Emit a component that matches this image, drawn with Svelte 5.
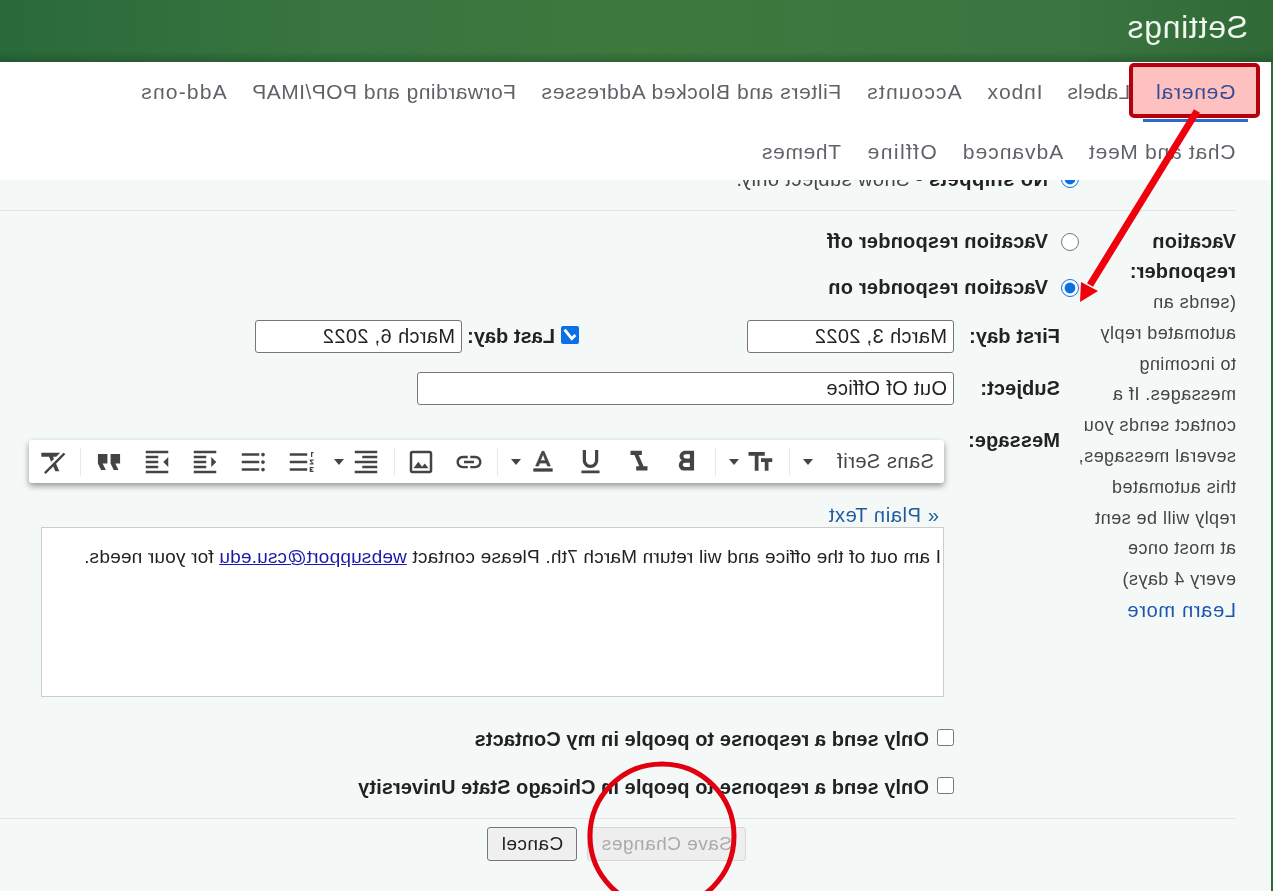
<script lang="ts">
  // the reference is a mirrored shot of the settings page, so the page is
  // written left-to-right and flipped as a whole
  // ls = letter spacing per tab, the shot's font is a little wider on some words
  const row1 = [
    { name: 'General', ls: 0.8 },
    { name: 'Labels', ls: 0.15 },
    { name: 'Inbox', ls: 0.85 },
    { name: 'Accounts', ls: 1.15 },
    { name: 'Filters and Blocked Addresses', ls: 0.61 },
    { name: 'Forwarding and POP/IMAP', ls: 0.48 },
    { name: 'Add-ons', ls: 1.2 }
  ];
  const row2 = [
    { name: 'Chat and Meet', ls: 0.73 },
    { name: 'Advanced', ls: 1 },
    { name: 'Offline', ls: 1.5 },
    { name: 'Themes', ls: 0.65 }
  ];

  const help = ['(sends an', 'automated reply', 'to incoming', 'messages. If a', 'contact sends you', 'several messages,', 'this automated', 'reply will be sent', 'at most once', 'every 4 days)'];

  const icons = {
    size: 'M9 4v3h5v12h3V7h5V4H9zm-6 8h3v7h3v-7h3V9H3v3z',
    bold: 'M15.6 10.79c.97-.67 1.65-1.77 1.65-2.79 0-2.26-1.75-4-4-4H7v14h7.04c2.09 0 3.71-1.7 3.71-3.79 0-1.52-.86-2.82-2.15-3.42zM10 6.5h3c.83 0 1.5.67 1.5 1.5s-.67 1.5-1.5 1.5h-3v-3zm3.5 9H10v-3h3.5c.83 0 1.5.67 1.5 1.5s-.67 1.5-1.5 1.5z',
    italic: 'M10 4v3h2.21l-3.42 8H6v3h8v-3h-2.21l3.42-8H18V4z',
    underline: 'M12 17c3.31 0 6-2.69 6-6V3h-2.5v8c0 1.93-1.57 3.5-3.5 3.5S8.5 12.93 8.5 11V3H6v8c0 3.31 2.69 6 6 6zm-7 2v2h14v-2H5z',
    color: 'M5 17v2h14v-2H5zm4.5-4.2h5l.9 2.2h2.1L12.75 4h-1.5L6.5 15h2.1l.9-2.2zM12 5.98L13.87 11h-3.74L12 5.98z',
    link: 'M3.9 12c0-1.71 1.39-3.1 3.1-3.1h4V7H7c-2.76 0-5 2.24-5 5s2.24 5 5 5h4v-1.9H7c-1.71 0-3.1-1.39-3.1-3.1zM8 13h8v-2H8v2zm9-6h-4v1.9h4c1.71 0 3.1 1.39 3.1 3.1s-1.39 3.1-3.1 3.1h-4V17h4c2.76 0 5-2.24 5-5s-2.24-5-5-5z',
    image: 'M19 5v14H5V5h14m0-2H5c-1.1 0-2 .9-2 2v14c0 1.1.9 2 2 2h14c1.1 0 2-.9 2-2V5c0-1.1-.9-2-2-2zm-4.86 8.86l-3 3.87L9 13.14 6 17h12l-3.86-5.14z',
    align: 'M15 15H3v2h12v-2zm0-8H3v2h12V7zM3 13h18v-2H3v2zm0 8h18v-2H3v2zM3 3v2h18V3H3z',
    numbered: 'M2 17h2v.5H3v1h1v.5H2v1h3v-4H2v1zm1-9h1V4H2v1h1v3zm-1 3h1.8L2 13.1v.9h3v-1H3.2L5 10.9V10H2v1zm5-6v2h14V5H7zm0 14h14v-2H7v2zm0-6h14v-2H7v2z',
    bulleted: 'M4 10.5c-.83 0-1.5.67-1.5 1.5s.67 1.5 1.5 1.5 1.5-.67 1.5-1.5-.67-1.5-1.5-1.5zm0-6c-.83 0-1.5.67-1.5 1.5S3.17 7.5 4 7.5 5.5 6.83 5.5 6 4.83 4.5 4 4.5zm0 12c-.83 0-1.5.68-1.5 1.5s.68 1.5 1.5 1.5 1.5-.68 1.5-1.5-.67-1.5-1.5-1.5zM7 19h14v-2H7v2zm0-6h14v-2H7v2zm0-8v2h14V5H7z',
    outdent: 'M11 17h10v-2H11v2zm-8-5l4 4V8l-4 4zm0 9h18v-2H3v2zM3 3v2h18V3H3zm8 6h10V7H11v2zm0 4h10v-2H11v2z',
    indent: 'M3 21h18v-2H3v2zM3 8v8l4-4-4-4zm8 9h10v-2H11v2zM3 3v2h18V3H3zm8 6h10V7H11v2zm0 4h10v-2H11v2z',
    quote: 'M6 17h3l2-4V7H5v6h3zm8 0h3l2-4V7h-6v6h3z',
    clear: 'M3.27 5L2 6.27l6.97 6.97L6.5 19h3l1.57-3.66L16.73 21 18 19.73 3.55 5.27 3.27 5zM6 5v.18L8.82 8h2.4l-.72 1.68 2.1 2.1L14.21 8H20V5H6z'
  };

  // toolbar groups, a caret follows an icon where the name ends in "+"
  const groups = [
    ['size+'],
    ['bold', 'italic', 'underline', 'color+'],
    ['link', 'image'],
    ['align+', 'numbered', 'bulleted', 'outdent', 'indent', 'quote'],
    ['clear']
  ];
</script>

<div class="page">
  <header class="top">
    <h1>Settings</h1>
  </header>

  <nav class="tabs">
    <div class="tab-row">
      {#each row1 as tab, i}
        <span class="tab" class:active={i === 0} style:letter-spacing="{tab.ls}px">{tab.name}</span>
      {/each}
    </div>
    <div class="tab-row">
      {#each row2 as tab}
        <span class="tab" style:letter-spacing="{tab.ls}px">{tab.name}</span>
      {/each}
    </div>
  </nav>

  <main class="content">
    <div class="snippets">
      <input type="radio" checked name="snip" />
      <span class="opt"><b>No snippets</b> - Show subject only.</span>
    </div>

    <section class="vacation">
      <div class="side">
        <b class="side-title">Vacation responder:</b>
        {#each help as line}
          <span class="side-line">{line}</span>
        {/each}
        <a class="side-line link" href="#more">Learn more</a>
      </div>

      <div class="main">
        <label class="radio-row">
          <input type="radio" name="vac" />
          <b>Vacation responder off</b>
        </label>
        <label class="radio-row">
          <input type="radio" name="vac" checked />
          <b>Vacation responder on</b>
        </label>

        <div class="form-row first">
          <b class="form-label">First day:</b>
          <input class="text date" type="text" value="March 3, 2022" />
          <input class="last-check" type="checkbox" checked />
          <b class="last-label">Last day:</b>
          <input class="text date" type="text" value="March 6, 2022" />
        </div>

        <div class="form-row subject">
          <b class="form-label">Subject:</b>
          <input class="text subject-input" type="text" value="Out Of Office" />
        </div>

        <div class="form-row message">
          <b class="form-label">Message:</b>
          <div class="editor">
            <div class="toolbar">
              <span class="font-name">Sans Serif</span>
              <i class="caret font-caret"></i>
              {#each groups as group, g}
                <span class="sep sep-{g}"></span>
                {#each group as item}
                  <span class="tool">
                    <span class="glyph i-{item.replace('+', '')}">
                      <svg viewBox="0 0 24 24"><path d={icons[item.replace('+', '')]} /></svg>
                    </span>
                    {#if item.endsWith('+')}<i class="caret tool-caret"></i>{/if}
                  </span>
                {/each}
              {/each}
            </div>
            <a class="plain" href="#plain">« Plain Text</a>
            <div class="body-box">I am out of the office and wil return March 7th. Please contact <a href="#mail">websupport@csu.edu</a> for your needs.</div>
          </div>
        </div>

        <label class="only first-only">
          <input type="checkbox" />
          <b>Only send a response to people in my Contacts</b>
        </label>
        <label class="only">
          <input type="checkbox" />
          <b>Only send a response to people in Chicago State University</b>
        </label>
      </div>
    </section>

    <div class="actions">
      <button class="btn" disabled>Save Changes</button>
      <button class="btn">Cancel</button>
    </div>
  </main>

  <!-- hand-drawn annotations lying over the page -->
  <svg class="marks tint" width="1273" height="891" viewBox="0 0 1273 891">
    <rect x="15" y="65" width="127" height="51" fill="#ffc0c0" />
  </svg>
  <svg class="marks" width="1273" height="891" viewBox="0 0 1273 891">
    <rect x="15" y="65" width="127" height="51" rx="3" fill="none" stroke="#b6000e" stroke-width="4" />
    <path d="M76 111L183 285" stroke="#f0000c" stroke-width="7" fill="none" />
    <path d="M193 302L192 282L175 291z" fill="#f0000c" />
    <circle cx="611" cy="836" r="72" fill="none" stroke="#e0000f" stroke-width="5" />
  </svg>
</div>

<style>
  :global(body) {
    margin: 0;
    background: #f4f8f6;
  }

  .page {
    position: relative;
    width: 1273px;
    height: 891px;
    overflow: hidden;
    display: flex;
    flex-direction: column;
    transform: scaleX(-1);
    font-family: "Liberation Sans", Arial, sans-serif;
    color: #222;
    background: #f4f8f6;
  }

  .top {
    height: 62px;
    flex: none;
    box-sizing: border-box;
    padding-left: 25px;
    background:
      linear-gradient(180deg, rgba(255, 255, 255, 0) 82%, rgba(0, 30, 10, 0.22) 100%),
      linear-gradient(90deg, #2f6a36 0%, #3a7540 15%, #3d7a3e 50%, #387540 75%, #2a6a3a 100%);
  }

  h1 {
    margin: 0;
    font-size: 32px;
    font-weight: 400;
    line-height: 55px;
    color: #f2f6f0;
    letter-spacing: 0.7px;
  }

  .tabs {
    height: 118px;
    flex: none;
    box-sizing: border-box;
    padding-left: 23px;
    background: #fff;
    border-left: 2px solid #2d6a38;
  }

  .tab-row {
    display: flex;
    height: 60px;
  }

  .tab {
    box-sizing: border-box;
    height: 60px;
    padding: 0 12.5px;
    line-height: 60px;
    font-size: 21px;
    color: #5f6368;
    white-space: nowrap;
  }

  .active {
    color: #3367c8;
    border-bottom: 3px solid #3367c8;
  }

  .content {
    flex: 1;
    overflow: hidden;
    box-sizing: border-box;
    padding-left: 35px;
    border-left: 2px solid #2d6a38;
  }

  .snippets {
    display: flex;
    align-items: center;
    box-sizing: border-box;
    height: 51px;
    margin-top: -20px;
    padding: 0 0 12px 157px;
    border-bottom: 1px solid #e0e4e2;
  }

  input[type="radio"],
  input[type="checkbox"] {
    width: 18px;
    height: 18px;
    margin: 0;
    flex: none;
    accent-color: #0b6fe6;
  }

  .opt {
    margin-left: 13px;
    font-size: 20px;
    letter-spacing: 0.45px;
    color: #444;
  }

  .opt b {
    color: #222;
  }

  .vacation {
    display: flex;
  }

  .side {
    width: 157px;
    flex: none;
    display: flex;
    flex-direction: column;
    padding-top: 15px;
  }

  .side-title {
    font-size: 20px;
    line-height: 30px;
    letter-spacing: 0.2px;
    margin-bottom: 1px;
  }

  .side-line {
    font-size: 18px;
    line-height: 30.8px;
    letter-spacing: 0.45px;
    color: #444;
    white-space: nowrap;
  }

  .link {
    font-size: 20px;
    letter-spacing: 0.7px;
    color: #1a56b0;
    text-decoration: none;
  }

  .main {
    flex: 1;
    padding-top: 8px;
  }

  .radio-row {
    display: flex;
    align-items: center;
    gap: 13px;
    height: 46px;
    font-size: 20px;
    letter-spacing: 0.2px;
  }

  .radio-row b {
    margin-bottom: 2px;
  }

  .form-row {
    display: flex;
    align-items: center;
    font-size: 20px;
    letter-spacing: 0.1px;
  }

  .form-label {
    width: 106px;
    flex: none;
    margin-left: 19px;
  }

  .first {
    height: 33px;
    margin-top: 9px;
  }

  .subject {
    height: 33px;
    margin-top: 19px;
  }

  .text {
    box-sizing: border-box;
    height: 33px;
    padding: 0 6px;
    border: 1px solid #777;
    border-radius: 3px;
    background: #fff;
    font-family: inherit;
    font-size: 20px;
    letter-spacing: 0.35px;
    color: #222;
    flex: none;
  }

  .date {
    width: 207px;
  }

  .subject-input {
    width: 537px;
  }

  .first .last-check {
    margin-left: 168px;
    position: relative;
    top: -2px;
  }

  .last-label {
    margin-left: 6px;
    width: 93px;
    flex: none;
    letter-spacing: 0;
  }

  .message {
    align-items: flex-start;
    margin-top: 35px;
  }

  .message .form-label {
    margin-top: -11px;
  }

  .editor {
    padding-left: 10px;
    width: 915px;
    flex: none;
    letter-spacing: 0;
    font-weight: 400;
  }

  .toolbar {
    display: flex;
    align-items: center;
    width: 915px;
    height: 43px;
    box-sizing: border-box;
    padding-left: 10px;
    background: #fff;
    border-radius: 3px;
    box-shadow: 0 3px 6px rgba(0, 0, 0, 0.4);
  }

  .font-name {
    width: 98px;
    font-size: 20px;
    letter-spacing: 0.5px;
    color: #444;
    white-space: nowrap;
  }

  .caret {
    display: block;
    width: 0;
    height: 0;
    border-left: 5px solid transparent;
    border-right: 5px solid transparent;
    border-top: 6px solid #444;
    flex: none;
  }

  .font-caret {
    margin-left: 24px;
    margin-right: 13px;
  }

  .sep {
    width: 1px;
    height: 28px;
    margin: 0 4px;
    background: #e8e8e8;
    flex: none;
  }

  .sep-0 {
    margin-left: 0;
  }

  .sep-3 {
    margin-left: 2px;
  }

  .tool {
    display: flex;
    align-items: center;
    flex: none;
  }

  .glyph {
    display: flex;
    align-items: center;
    justify-content: center;
    width: 48px;
    height: 40px;
    flex: none;
  }

  .glyph svg {
    width: 30px;
    height: 30px;
    fill: #444;
    display: block;
    flex: none;
  }

  .i-color svg,
  .i-clear svg {
    width: 32px;
    height: 32px;
  }

  .i-color path {
    stroke: #444;
    stroke-width: 0.5;
  }

  .i-bold svg {
    width: 34px;
    height: 34px;
  }

  .i-italic svg {
    width: 34px;
    height: 34px;
  }

  .i-underline svg {
    width: 31px;
    height: 31px;
  }

  .i-quote svg {
    width: 38px;
    height: 38px;
  }

  .tool-caret {
    margin: 0 9px 0 -2px;
  }

  .plain {
    display: block;
    margin: 21px 0 0 5px;
    height: 23px;
    font-size: 20px;
    letter-spacing: 0.65px;
    line-height: 22px;
    color: #1f5a9e;
    text-decoration: none;
  }

  .body-box {
    box-sizing: border-box;
    width: 903px;
    height: 170px;
    padding: 17px 2px;
    background: #fff;
    border: 1px solid #ccc;
    font-size: 19px;
    line-height: 24px;
    letter-spacing: 0.2px;
    color: #222;
    white-space: nowrap;
  }

  .body-box a {
    color: #1a1aa8;
  }

  .only {
    display: flex;
    align-items: center;
    gap: 7px;
    margin-left: 125px;
    height: 48px;
    font-size: 20px;
    letter-spacing: 0.07px;
  }

  .only input {
    position: relative;
    top: -2px;
    width: 17px;
    height: 17px;
    margin-right: 1px;
  }

  .first-only {
    margin-top: 18px;
  }

  .actions {
    display: flex;
    gap: 10px;
    margin-top: 7px;
    padding: 8px 0 0 490px;
    border-top: 1px solid #e0e4e2;
  }

  .btn {
    height: 34px;
    box-sizing: border-box;
    padding: 0 13px;
    font-family: inherit;
    font-size: 19px;
    letter-spacing: 0.5px;
    border: 1px solid #777;
    border-radius: 3px;
    background: #efefef;
    color: #222;
  }

  .btn:disabled {
    color: #aaa;
    border-color: #d8d8d8;
    background: #eee;
  }

  .marks {
    position: absolute;
    top: 0;
    left: 0;
    pointer-events: none;
  }

  .tint {
    mix-blend-mode: multiply;
  }
</style>
